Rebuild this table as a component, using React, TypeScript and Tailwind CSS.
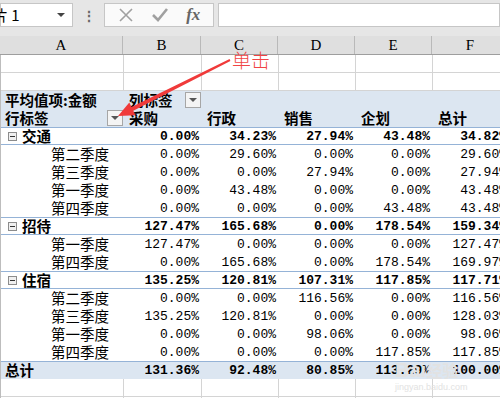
import React from "react";

const COLS = [123, 78, 77, 77, 77, 77];
const LETTERS = ["A", "B", "C", "D", "E", "F"];

type Row = { label: string; values: string[]; group?: boolean };

const rows: Row[] = [
  { label: "交通", group: true, values: ["0.00%", "34.23%", "27.94%", "43.48%", "34.82%"] },
  { label: "第二季度", values: ["0.00%", "29.60%", "0.00%", "0.00%", "29.60%"] },
  { label: "第三季度", values: ["0.00%", "0.00%", "27.94%", "0.00%", "27.94%"] },
  { label: "第一季度", values: ["0.00%", "43.48%", "0.00%", "0.00%", "43.48%"] },
  { label: "第四季度", values: ["0.00%", "0.00%", "0.00%", "43.48%", "43.48%"] },
  { label: "招待", group: true, values: ["127.47%", "165.68%", "0.00%", "178.54%", "159.34%"] },
  { label: "第一季度", values: ["127.47%", "0.00%", "0.00%", "0.00%", "127.47%"] },
  { label: "第四季度", values: ["0.00%", "165.68%", "0.00%", "178.54%", "169.97%"] },
  { label: "住宿", group: true, values: ["135.25%", "120.81%", "107.31%", "117.85%", "117.71%"] },
  { label: "第二季度", values: ["0.00%", "0.00%", "116.56%", "0.00%", "116.56%"] },
  { label: "第三季度", values: ["135.25%", "120.81%", "0.00%", "0.00%", "128.03%"] },
  { label: "第一季度", values: ["0.00%", "0.00%", "98.06%", "0.00%", "98.06%"] },
  { label: "第四季度", values: ["0.00%", "0.00%", "0.00%", "117.85%", "117.85%"] },
];

const total = ["131.36%", "92.48%", "80.85%", "113.29%", "100.00%"];

const cjk = "font-['Noto_Sans_CJK_SC',sans-serif]";
const mono = "font-['Liberation_Mono','DejaVu_Sans_Mono',monospace]";

// small filter button used in the pivot header
const FilterButton = () => (
  <span className="flex h-[16px] w-[16px] items-center justify-center border border-[#a6a6a6] bg-[#f4f4f4]">
    <span className="h-0 w-0 border-x-[4px] border-t-[4px] border-x-transparent border-t-[#555]" />
  </span>
);

const EmptyRow = () => (
  <div className="flex h-[18px]">
    {COLS.map((w, i) => (
      <div key={i} style={{ width: w }} className="shrink-0 border-b border-r border-[#d4d4d4]" />
    ))}
  </div>
);

const App = () => {
  return (
    <div className="relative h-[398px] w-[500px] overflow-hidden bg-white text-black">
      {/* formula bar */}
      <div className="flex h-[36px] items-start gap-0 bg-[#e6e6e6] pt-[3px]">
        <div className="flex h-[24px] w-[73px] shrink-0 items-center justify-between border border-[#c6c6c6] bg-white pr-[7px]">
          <span className={`-ml-[8px] text-[15px] ${cjk}`}>片 1</span>
          <span className="h-0 w-0 border-x-[4px] border-t-[4px] border-x-transparent border-t-[#444]" />
        </div>
        <div className="flex h-[24px] w-[31px] shrink-0 items-center justify-center text-[14px] font-bold text-[#666]">⋮</div>
        <div className="flex h-[24px] w-[110px] shrink-0 items-center justify-around border border-[#c6c6c6] bg-[#fafafa] px-[4px]">
          <svg width="16" height="16" viewBox="0 0 16 16">
            <path d="M2 2 L14 14 M14 2 L2 14" stroke="#a0a0a0" strokeWidth="1.6" />
          </svg>
          <svg width="18" height="16" viewBox="0 0 18 16">
            <path d="M2 8 L7 13 L16 2" stroke="#a0a0a0" strokeWidth="2.6" fill="none" />
          </svg>
          <span className="font-['Liberation_Serif',serif] text-[17px] italic font-bold text-[#666]">fx</span>
        </div>
        <div className="ml-[4px] h-[24px] flex-1 border border-[#c6c6c6] bg-white" />
      </div>

      {/* column headers */}
      <div className="flex h-[19px] border-b border-[#9e9e9e] bg-[#dfdfdf]">
        {COLS.map((w, i) => (
          <div
            key={i}
            style={{ width: w }}
            className="flex shrink-0 items-center justify-center border-r border-[#b9b9b9] font-['Liberation_Serif',serif] text-[15px] leading-none"
          >
            {LETTERS[i]}
          </div>
        ))}
      </div>

      <div className="border-l border-[#bdbdbd]">
        <EmptyRow />
        <EmptyRow />

        {/* pivot header */}
        <div className={`bg-[#dce6f1] ${cjk} text-[14.5px] font-bold`}>
          <div className="flex h-[18px] items-center">
            <div style={{ width: COLS[0] }} className="shrink-0 pl-[4px] leading-none">平均值项:金额</div>
            <div style={{ width: COLS[1] }} className="flex shrink-0 items-center justify-between pl-[5px] pr-[1px] leading-none">
              <span>列标签</span>
              <FilterButton />
            </div>
          </div>
          <div className="flex h-[18px] items-center">
            <div style={{ width: COLS[0] }} className="flex shrink-0 items-center justify-between pl-[4px] pr-[1px] leading-none">
              <span>行标签</span>
              <FilterButton />
            </div>
            {["采购", "行政", "销售", "企划", "总计"].map((t, i) => (
              <div key={t} style={{ width: COLS[i + 1] }} className="shrink-0 pl-[5px] leading-none">
                {t}
              </div>
            ))}
          </div>
        </div>

        {/* pivot body */}
        {rows.map((r, idx) => (
          <div
            key={idx}
            className={`flex h-[18px] items-center ${r.group ? "border-y border-[#95b3d7] font-bold" : ""}`}
          >
            <div style={{ width: COLS[0] }} className={`flex shrink-0 items-center ${cjk} text-[14.5px] leading-none`}>
              {r.group ? (
                <>
                  <span className="ml-[7px] mr-[5px] flex h-[9px] w-[9px] items-center justify-center border border-[#8c8c8c] bg-[#f0f0f0]">
                    <span className="h-px w-[5px] bg-[#333]" />
                  </span>
                  <span>{r.label}</span>
                </>
              ) : (
                <span className="ml-[50px]">{r.label}</span>
              )}
            </div>
            {r.values.map((v, i) => (
              <div
                key={i}
                style={{ width: COLS[i + 1] }}
                className={`shrink-0 pr-[3px] text-right ${mono} text-[13px] leading-none`}
              >
                {v}
              </div>
            ))}
          </div>
        ))}

        {/* grand total */}
        <div className="flex h-[18px] items-center border-t border-[#95b3d7] bg-[#dce6f1] font-bold">
          <div style={{ width: COLS[0] }} className={`shrink-0 pl-[4px] ${cjk} text-[14.5px] leading-none`}>
            总计
          </div>
          {total.map((v, i) => (
            <div
              key={i}
              style={{ width: COLS[i + 1] }}
              className={`shrink-0 pr-[3px] text-right ${mono} text-[13px] leading-none`}
            >
              {v}
            </div>
          ))}
        </div>

        <EmptyRow />
        <EmptyRow />
      </div>

      {/* annotation arrow */}
      <svg className="pointer-events-none absolute left-0 top-0" width="500" height="398">
        <polygon
          points="229.6,59.1 230.4,60.9 133.3,110.7 135.5,115.2 118,116 129.3,102.6 131.5,107.1"
          fill="#f03a3a"
        />
      </svg>
      <span className={`absolute left-[232px] top-[46px] text-[19px] font-light text-[#f04444] ${cjk}`}>单击</span>

      {/* faint watermark */}
      <div className="pointer-events-none absolute left-[395px] top-[360px] text-[#e2e2e2]">
        <div className="font-['Liberation_Sans',sans-serif] text-[20px] font-bold leading-none">
          Bai<span className={`${cjk} text-[16px]`}>经验</span>
        </div>
        <div className="font-['Liberation_Sans',sans-serif] text-[9px] leading-none mt-[3px]">jingyan.baidu.com</div>
      </div>
    </div>
  );
};

export default App;
